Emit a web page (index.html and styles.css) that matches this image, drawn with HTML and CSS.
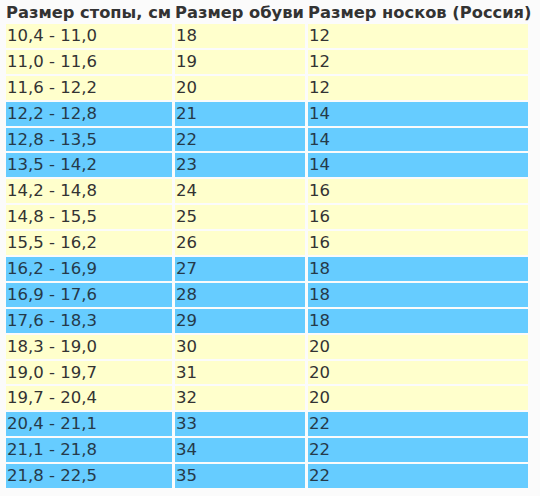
FILE: index.html
```html
<!DOCTYPE html>
<html lang="ru">
<head>
<meta charset="utf-8">
<link rel="stylesheet" href="styles.css">
</head>
<body>
<table class="sizes">
<thead>
<tr><th class="c1">Размер стопы, см</th><th class="c2">Размер обуви</th><th class="c3">Размер носков (Россия)</th></tr>
</thead>
<tbody>
<tr class="y"><td>10,4 - 11,0</td><td>18</td><td>12</td></tr>
<tr class="y"><td>11,0 - 11,6</td><td>19</td><td>12</td></tr>
<tr class="y"><td>11,6 - 12,2</td><td>20</td><td>12</td></tr>
<tr class="b"><td>12,2 - 12,8</td><td>21</td><td>14</td></tr>
<tr class="b"><td>12,8 - 13,5</td><td>22</td><td>14</td></tr>
<tr class="b"><td>13,5 - 14,2</td><td>23</td><td>14</td></tr>
<tr class="y"><td>14,2 - 14,8</td><td>24</td><td>16</td></tr>
<tr class="y"><td>14,8 - 15,5</td><td>25</td><td>16</td></tr>
<tr class="y"><td>15,5 - 16,2</td><td>26</td><td>16</td></tr>
<tr class="b"><td>16,2 - 16,9</td><td>27</td><td>18</td></tr>
<tr class="b"><td>16,9 - 17,6</td><td>28</td><td>18</td></tr>
<tr class="b"><td>17,6 - 18,3</td><td>29</td><td>18</td></tr>
<tr class="y"><td>18,3 - 19,0</td><td>30</td><td>20</td></tr>
<tr class="y"><td>19,0 - 19,7</td><td>31</td><td>20</td></tr>
<tr class="y"><td>19,7 - 20,4</td><td>32</td><td>20</td></tr>
<tr class="b"><td>20,4 - 21,1</td><td>33</td><td>22</td></tr>
<tr class="b"><td>21,1 - 21,8</td><td>34</td><td>22</td></tr>
<tr class="b"><td>21,8 - 22,5</td><td>35</td><td>22</td></tr>
</tbody>
</table>
</body>
</html>
```

FILE: styles.css
```css
html, body {
  margin: 0;
  padding: 0;
  background: #fbfbfb;
}
body {
  font-family: "DejaVu Sans", Verdana, sans-serif;
  color: #333;
}
.sizes {
  border-collapse: separate;
  border-spacing: 3px 2px;
  margin: 0 0 0 3px;
  table-layout: fixed;
  width: 528px;
}
.sizes th, .sizes td {
  padding: 0 0 0 1px;
  text-align: left;
  white-space: nowrap;
  overflow: hidden;
}
.sizes th {
  font-size: 16.3px;
  font-weight: bold;
  height: 20px;
  padding-left: 0;
  overflow: visible;
}
.sizes td {
  font-size: 16.5px;
  height: 23.9px;
  line-height: 20px;
}
.c1 { width: 166px; }
.c2 { width: 130px; }
.c3 { width: 220px; }
.y td { background: #ffffcc; }
.b td { background: #66ccff; color: #253a4a; }
```
